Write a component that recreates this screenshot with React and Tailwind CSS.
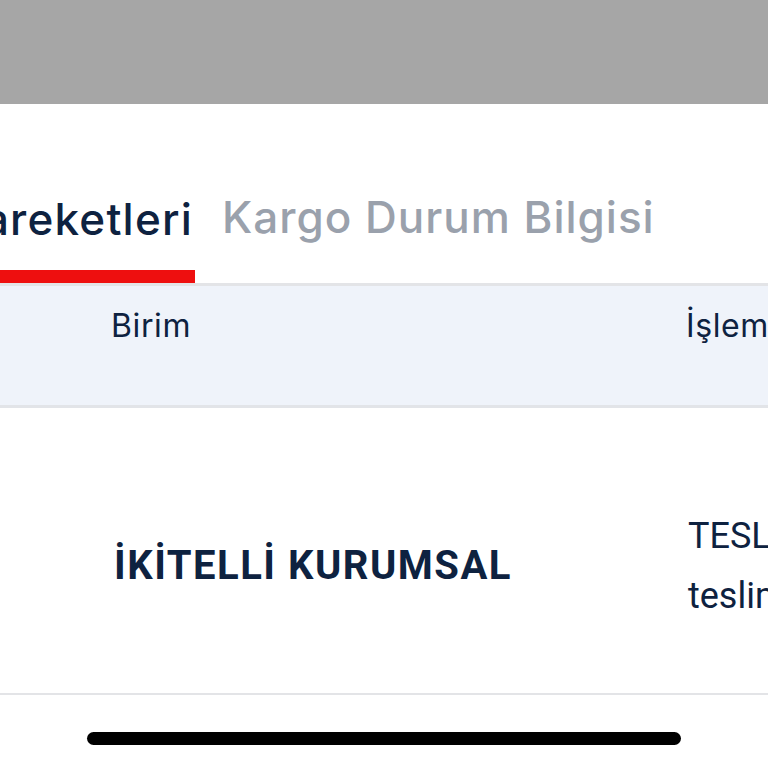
const tabFont = { fontFamily: "Inter, 'Noto Sans', sans-serif" }

export default function App() {
  return (
    <div className="w-[768px] h-[768px] overflow-hidden bg-white relative" style={tabFont}>
      <div className="h-[104px] bg-[#a6a6a6]" />

      {/* tabs */}
      <div className="h-[182px] flex items-end border-b-[3px] border-[#e3e4e7]">
        <div className="w-[195px] flex justify-end overflow-hidden shrink-0">
          <div className="flex flex-col items-stretch">
            <span className="whitespace-nowrap text-[44px] leading-none font-medium text-[#0e2240] tracking-[1.2px] pr-[2px]">
              Kargo Hareketleri
            </span>
            <div className="h-[14px] bg-[#ee0f0f] mt-[29px] -mb-[1px]" />
          </div>
        </div>
        <div className="ml-[27px] pb-[44px]">
          <span className="whitespace-nowrap text-[44px] leading-none font-medium text-[#9aa1ac] tracking-[1px]">
            Kargo Durum Bilgisi
          </span>
        </div>
      </div>

      {/* table header */}
      <div className="h-[122px] bg-[#eff3fa] border-b-[3px] border-[#e2e4e8] flex text-[#0e2240] text-[32px] tracking-[0.6px]">
        <div className="w-[686px] pl-[111px] pt-[16px] shrink-0">Birim</div>
        <div className="pt-[16px] whitespace-nowrap">İşlem Açıklaması</div>
      </div>

      {/* table row */}
      <div className="h-[287px] border-b-2 border-[#e3e4e7] flex items-center text-[#0e2240]" style={{ fontFamily: "Roboto, 'Open Sans', sans-serif" }}>
        <div className="w-[688px] pl-[114px] shrink-0 text-[40px] font-bold tracking-[1.5px] leading-none pt-[30px]">
          İKİTELLİ KURUMSAL
        </div>
        <div className="text-[36px] leading-[60px] whitespace-nowrap pt-[30px]">
          <div>TESLİM EDİLDİ</div>
          <div>teslim edildi</div>
        </div>
      </div>

      {/* home indicator */}
      <div className="flex justify-center pt-[37px]">
        <div className="w-[594px] h-[13px] rounded-full bg-black" />
      </div>
    </div>
  )
}
